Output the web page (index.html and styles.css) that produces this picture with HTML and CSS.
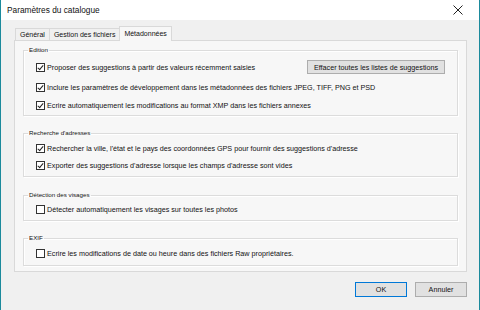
FILE: index.html
```html
<!DOCTYPE html>
<html lang="fr">

<head>
    <meta charset="UTF-8" />
    <title>Paramètres du catalogue</title>
    <link rel="stylesheet" href="styles.css">
</head>

<body>
    <div class="window">
        <div class="titlebar">
            <span class="title">Paramètres du catalogue</span>
            <svg class="close" width="10" height="10" viewBox="0 0 10 10">
                <path d="M0.5 0.5 L9.5 9.5 M9.5 0.5 L0.5 9.5" stroke="#222" stroke-width="1" fill="none" />
            </svg>
        </div>

        <div class="content">
            <div class="tabs">
                <span class="tab">Général</span>
                <span class="tab">Gestion des fichiers</span>
                <span class="tab active">Métadonnées</span>
            </div>

            <div class="panel">
                <fieldset class="group group-edition">
                    <legend>Edition</legend>
                    <div class="row row-first">
                        <label class="check"><span class="box checked"></span>Proposer des suggestions à partir des valeurs récemment saisies</label>
                        <span class="btn btn-wide">Effacer toutes les listes de suggestions</span>
                    </div>
                    <div class="row">
                        <label class="check"><span class="box checked"></span>Inclure les paramètres de développement dans les métadonnées des fichiers JPEG, TIFF, PNG et PSD</label>
                    </div>
                    <div class="row">
                        <label class="check"><span class="box checked"></span>Ecrire automatiquement les modifications au format XMP dans les fichiers annexes</label>
                    </div>
                </fieldset>

                <fieldset class="group group-adresses">
                    <legend>Recherche d'adresses</legend>
                    <div class="row row-short">
                        <label class="check"><span class="box checked"></span>Rechercher la ville, l'état et le pays des coordonnées GPS pour fournir des suggestions d'adresse</label>
                    </div>
                    <div class="row row-short">
                        <label class="check"><span class="box checked"></span>Exporter des suggestions d'adresse lorsque les champs d'adresse sont vides</label>
                    </div>
                </fieldset>

                <fieldset class="group group-visages">
                    <legend>Détection des visages</legend>
                    <div class="row">
                        <label class="check"><span class="box"></span>Détecter automatiquement les visages sur toutes les photos</label>
                    </div>
                </fieldset>

                <fieldset class="group group-exif">
                    <legend>EXIF</legend>
                    <div class="row">
                        <label class="check"><span class="box"></span>Ecrire les modifications de date ou heure dans des fichiers Raw propriétaires.</label>
                    </div>
                </fieldset>
            </div>

            <div class="footer">
                <span class="btn btn-default">OK</span>
                <span class="btn">Annuler</span>
            </div>
        </div>
    </div>
</body>

</html>
```

FILE: styles.css
```css
* {
    margin: 0;
    padding: 0;
    box-sizing: border-box;
}

body {
    font-family: 'Liberation Sans', Arial, sans-serif;
    font-size: 7.2px;
    color: #111;
    background: #ffffff;
}

.window {
    width: 480px;
    height: 310px;
    border-left: 1px solid #1b8a9c;
    border-right: 1px solid #1b8a9c;
    display: flex;
    flex-direction: column;
}

/* Title bar */
.titlebar {
    height: 20px;
    background: #ffffff;
    display: flex;
    align-items: center;
    justify-content: space-between;
    padding: 0 16px 0 6px;
}

.title {
    font-size: 8.3px;
}

.close {
    display: block;
}

.content {
    flex: 1;
    background: #f0f0f0;
    padding-top: 6px;
}

/* Tabs */
.tabs {
    display: flex;
    align-items: flex-end;
    height: 14px;
    padding-left: 14px;
}

.tab {
    height: 12px;
    line-height: 11px;
    padding: 0 4px;
    font-size: 7px;
    border: 1px solid #d9d9d9;
    border-bottom: none;
    margin-right: -1px;
    background: #f0f0f0;
}

.tab.active {
    height: 15px;
    line-height: 13px;
    margin-bottom: -1px;
    background: #f7f7f7;
    position: relative;
    z-index: 1;
}

.panel {
    margin: 0 12px 0 13px;
    border: 1px solid #d9d9d9;
    background: #f7f7f7;
    padding: 5px 8px 5px 8px;
}

/* Group boxes */
.group {
    border: 1px solid #dcdcdc;
    padding: 0 8px 0 12px;
    box-shadow: inset 1px 1px 0 #ffffff, 1px 1px 0 #ffffff;
}

.group legend {
    font-size: 6.2px;
    line-height: 8px;
    height: 8px;
    padding: 0 1px;
    margin-left: -8px;
}

.group-edition {
    padding-top: 4px;
    padding-bottom: 1px;
}

.group-adresses {
    margin-top: 13px;
    padding-top: 3px;
    padding-bottom: 2px;
}

.group-visages {
    margin-top: 14px;
    padding-top: 1px;
    padding-bottom: 2px;
}

.group-exif {
    margin-top: 13px;
    padding-top: 2px;
    padding-bottom: 3px;
}

.row {
    height: 18px;
    display: flex;
    align-items: center;
    justify-content: space-between;
}

.row-first {
    margin-bottom: 2px;
}

.row-short {
    height: 17px;
}

.check {
    display: flex;
    align-items: center;
    gap: 2px;
    white-space: nowrap;
}

.box {
    width: 9px;
    height: 9px;
    border: 1px solid #333333;
    background: #ffffff;
    position: relative;
}

.box.checked::after {
    content: '';
    position: absolute;
    left: 2px;
    top: 0px;
    width: 2px;
    height: 5px;
    border-right: 1px solid #222;
    border-bottom: 1px solid #222;
    transform: rotate(40deg);
}

/* Buttons */
.btn {
    display: inline-flex;
    align-items: center;
    justify-content: center;
    height: 14px;
    background: #e1e1e1;
    border: 1px solid #adadad;
    white-space: nowrap;
}

.btn-wide {
    width: 138px;
    margin-right: 4px;
}

.footer {
    display: flex;
    justify-content: flex-end;
    gap: 8px;
    padding: 10px 12px 0 0;
}

.footer .btn {
    width: 52px;
    height: 15px;
}

.btn-default {
    border-color: #0078d7;
}
```
